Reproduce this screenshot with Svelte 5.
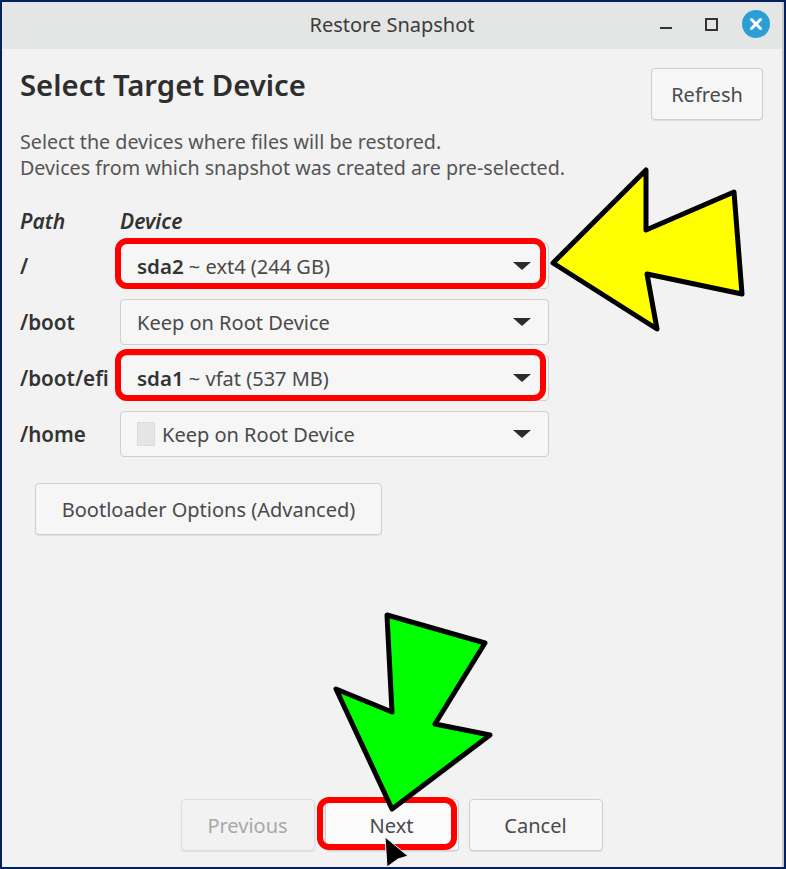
<script lang="ts">
  interface Row {
    path: string
    dev?: string
    rest: string
    icon?: boolean
  }

  const rows: Row[] = [
    { path: '/', dev: 'sda2', rest: ' ~ ext4 (244 GB)' },
    { path: '/boot', rest: 'Keep on Root Device' },
    { path: '/boot/efi', dev: 'sda1', rest: ' ~ vfat (537 MB)' },
    { path: '/home', rest: 'Keep on Root Device', icon: true },
  ]
</script>

<div class="window">
  <div class="frame">
    <header class="titlebar">
      <span class="title">Restore Snapshot</span>
      <div class="winbtns">
        <span class="min"></span>
        <span class="max"></span>
        <span class="close">
          <svg width="14" height="14" viewBox="0 0 14 14"><path d="M2.5 2.5l9 9M11.5 2.5l-9 9" stroke="#fff" stroke-width="3" stroke-linecap="round" /></svg>
        </span>
      </div>
    </header>

    <main class="body">
      <div class="top">
        <h1>Select Target Device</h1>
        <button class="btn refresh">Refresh</button>
      </div>
      <p class="desc">Select the devices where files will be restored.<br />Devices from which snapshot was created are pre-selected.</p>

      <div class="grid">
        <div class="head">Path</div>
        <div class="head">Device</div>
        {#each rows as r}
          <div class="path">{r.path}</div>
          <div class="combo">
            {#if r.icon}<span class="drive"></span>{/if}
            <span class="val">{#if r.dev}<b>{r.dev}</b>{/if}{r.rest}</span>
            <span class="caret"></span>
          </div>
        {/each}
      </div>

      <button class="btn boot">Bootloader Options (Advanced)</button>

      <footer class="actions">
        <button class="btn act" disabled>Previous</button>
        <button class="btn act next">Next</button>
        <button class="btn act">Cancel</button>
      </footer>
    </main>
  </div>

  <!-- annotations drawn on top of the screenshot -->
  <svg class="marks" width="786" height="869" viewBox="0 0 786 869">
    <g fill="none" stroke="#ff0000" stroke-width="6">
      <rect x="118" y="241" width="425" height="45" rx="9" />
      <rect x="118" y="352" width="425" height="46" rx="9" />
      <rect x="320" y="800" width="134" height="47" rx="9" />
    </g>
    <g stroke="#000" stroke-width="5" stroke-linejoin="round">
      <polygon fill="#ffff00" points="646,170 646,230 734,192 742,294 647,274 657,329 553,263" />
      <polygon fill="#00ff00" points="387,615 485,643 435,724 490,735 392,809 336,689 392,712" />
    </g>
    <path d="M385 837l23 19-10 3-11 8z" fill="#000" stroke="#f4f4f4" stroke-width="1" />
  </svg>
</div>

<style>
  :global(body) {
    margin: 0;
    background: #fff;
  }

  .window {
    position: relative;
    box-sizing: border-box;
    width: 786px;
    height: 869px;
    border: 2px solid #04215f;
    font-family: "Noto Sans", sans-serif;
    color: #4a4a4a;
    overflow: hidden;
  }

  .frame {
    box-sizing: border-box;
    height: 100%;
    display: flex;
    flex-direction: column;
    background: #f2f2f2;
    border-right: 2px solid #c8c8c8;
  }

  .titlebar {
    position: relative;
    flex: none;
    box-sizing: border-box;
    height: 47px;
    padding-bottom: 3px;
    display: flex;
    align-items: center;
    justify-content: center;
    background: #e4e5e5;
  }

  .title {
    font-size: 20px;
    color: #3c3c3c;
  }

  .winbtns {
    position: absolute;
    top: 0;
    right: 0;
    height: 44px;
    display: flex;
    align-items: center;
  }

  .min {
    width: 12px;
    height: 2px;
    margin: 8px 33px 0 0;
    background: #333;
  }

  .max {
    box-sizing: border-box;
    width: 13px;
    height: 13px;
    margin-right: 24px;
    border: 2px solid #333;
  }

  .close {
    width: 28px;
    height: 28px;
    margin-right: 12px;
    display: flex;
    align-items: center;
    justify-content: center;
    border-radius: 50%;
    background: #2a9fd6;
  }

  .body {
    flex: 1;
    display: flex;
    flex-direction: column;
    align-items: flex-start;
    padding: 0 19px 16px 18px;
  }

  .top {
    align-self: stretch;
    display: flex;
    justify-content: space-between;
    padding-top: 19px;
  }

  h1 {
    margin: 0;
    font-size: 29.3px;
    line-height: 34px;
    font-weight: 600;
    color: #2e2e2e;
  }

  .btn {
    box-sizing: border-box;
    height: 52px;
    border: 1px solid #cfcfcf;
    border-radius: 4px;
    background: #f6f6f6;
    font: inherit;
    font-size: 20px;
    color: #4a4a4a;
    box-shadow: 0 1px 1px rgba(0, 0, 0, 0.08);
  }

  .refresh {
    width: 112px;
  }

  .desc {
    margin: 9px 0 0;
    font-size: 19.7px;
    line-height: 26px;
    color: #555;
  }

  .grid {
    display: grid;
    grid-template-columns: 100px 429px;
    row-gap: 10px;
    margin-top: 27px;
    align-items: center;
  }

  .head {
    font-size: 21px;
    line-height: 26px;
    margin-bottom: -1px;
    font-weight: 600;
    font-style: italic;
    color: #333;
  }

  .path {
    font-size: 20.6px;
    font-weight: 600;
    color: #333;
  }

  .combo {
    box-sizing: border-box;
    height: 46px;
    display: flex;
    align-items: center;
    padding: 0 17px 0 16px;
    border: 1px solid #cfcfcf;
    border-radius: 4px;
    background: #f6f6f6;
    font-size: 20px;
    white-space: pre;
  }

  .combo b {
    font-weight: 600;
    font-size: 20.5px;
    color: #333;
  }

  .drive {
    width: 18px;
    height: 24px;
    margin-right: 7px;
    background: #e4e6e6;
    border: 1px solid #dcdcdc;
    box-sizing: border-box;
  }

  .val {
    flex: 1;
  }

  .caret {
    width: 0;
    height: 0;
    border: solid transparent;
    border-width: 8px 9px 0;
    border-top-color: #2b2b2b;
  }

  .boot {
    width: 347px;
    margin: 26px 0 0 15px;
  }

  .actions {
    align-self: stretch;
    margin-top: auto;
    display: flex;
    justify-content: center;
    gap: 10px;
  }

  .act {
    width: 134px;
  }

  .act:disabled {
    color: #a8a8a8;
    background: #f2f2f2;
    border-color: #dedede;
  }

  .next {
    background: #fbfbfb;
  }

  .marks {
    position: absolute;
    top: -2px;
    left: -2px;
    pointer-events: none;
  }
</style>
